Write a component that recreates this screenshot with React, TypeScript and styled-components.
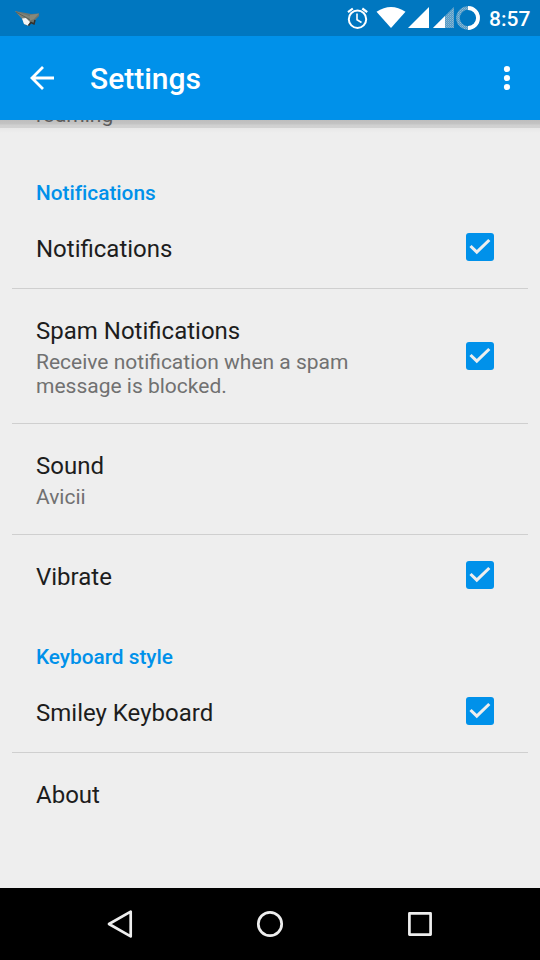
import React, { useState } from 'react';
import styled, { createGlobalStyle } from 'styled-components';

const GlobalStyle = createGlobalStyle`
  * { box-sizing: border-box; }
  body { margin: 0; background: #eee; font-family: Roboto, "Noto Sans", sans-serif; }
`;

const Screen = styled.div`
  width: 540px;
  height: 960px;
  display: flex;
  flex-direction: column;
  overflow: hidden;
  background: #eeeeee;
`;

const StatusBar = styled.div`
  flex: none;
  height: 36px;
  display: flex;
  align-items: center;
  justify-content: space-between;
  padding: 0 9px 0 14px;
  background: #0077c0;
  color: #fff;
`;

const StatusIcons = styled.div`
  display: flex;
  align-items: center;
`;

const Clock = styled.span`
  width: 42px;
  margin-left: 8px;
  font-size: 21px;
  line-height: 36px;
  font-weight: 500;
  padding-top: 2px;
  white-space: nowrap;
`;

const AppBar = styled.header`
  flex: none;
  height: 84px;
  display: flex;
  align-items: center;
  background: #0091ea;
  color: #fff;
`;

const BarButton = styled.button<{ $width: number }>`
  width: ${(p) => p.$width}px;
  height: 84px;
  padding: 0;
  border: 0;
  background: none;
  display: flex;
  align-items: center;
  justify-content: center;
`;

const BarTitle = styled.h1`
  flex: 1;
  margin: 0;
  padding: 2px 0 0 6px;
  font-size: 30px;
  line-height: 36px;
  font-weight: 500;
`;

const List = styled.main`
  flex: 1;
  min-height: 0;
  overflow: hidden;
  padding: 0 12px;
  background: linear-gradient(#bebebe 0, #c4c4c4 4px, #d0d0d0 5px, #d2d2d2 8px, #e8e8e8 8px, #eeeeee 13px);
`;

const Summary = styled.p`
  margin: 5px 0 0;
  width: 340px;
  font-size: 21px;
  line-height: 24px;
  color: #717171;
`;

const ScrolledSummary = styled(Summary)`
  margin: -17px 0 0;
  padding-left: 24px;
  height: 49px;
  color: #5c5c5c;
`;

const SectionHeader = styled.h2`
  height: 55px;
  margin: 0;
  padding: 29px 24px 0;
  font-size: 21px;
  line-height: 24px;
  font-weight: 500;
  letter-spacing: -0.01px;
  font-size: 20.8px;
  color: #0091ea;
`;

const Row = styled.div<{ $divided: boolean }>`
  display: flex;
  align-items: center;
  justify-content: space-between;
  padding-right: 34px;
  padding-left: 24px;
  border-bottom: ${(p) => (p.$divided ? '1px solid #cfcfcf' : '0')};
`;

const Labels = styled.div`
  padding: 28px 0 25px;
`;

const Label = styled.div`
  font-size: 24px;
  line-height: 28px;
  color: #1d1d1d;
`;

const Checkbox = styled.button<{ $on: boolean }>`
  width: 28px;
  height: 28px;
  margin-bottom: 1px;
  padding: 0;
  border: ${(p) => (p.$on ? '0' : '3px solid #717171')};
  border-radius: 3px;
  background: ${(p) => (p.$on ? '#0091ea' : 'transparent')};
  display: flex;
  align-items: center;
  justify-content: center;
`;

const NavBar = styled.nav`
  flex: none;
  height: 72px;
  display: flex;
  justify-content: center;
  background: #000;
`;

const NavButton = styled.button`
  width: 150px;
  height: 72px;
  padding: 0;
  border: 0;
  background: none;
  display: flex;
  align-items: center;
  justify-content: center;
`;

type SettingProps = {
  label: string;
  summary?: string;
  checkable?: boolean;
  divided?: boolean;
};

function Setting({ label, summary, checkable = false, divided = false }: SettingProps) {
  const [on, setOn] = useState(true);
  return (
    <Row $divided={divided}>
      <Labels>
        <Label>{label}</Label>
        {summary && <Summary>{summary}</Summary>}
      </Labels>
      {checkable && (
        <Checkbox $on={on} role="checkbox" aria-checked={on} aria-label={label} onClick={() => setOn(!on)}>
          {on && (
            <svg width="28" height="28" viewBox="0 0 28 28" fill="none">
              <path d="M4.5 13 L10.8 19.2 L23.3 7" stroke="#eee" strokeWidth="3.1" />
            </svg>
          )}
        </Checkbox>
      )}
    </Row>
  );
}

function PlaneIcon() {
  return (
    <svg width="28" height="36" viewBox="14 0 28 36">
      <path d="M15 11 L31 14 L39 13.5 L39 16 L35 20 L35 24 L31 23 L28 26 L24 24 L22 18 Z" fill="#6e756d" />
      <path d="M15 11 L32 17 L23 20 Z" fill="#7d8379" />
      <path d="M30 15 L39 13.5 L34 19 L29 21 Z" fill="#84887b" />
      <path d="M22 18.5 L26 18 L30 22 L28 25.5 L24 24 Z" fill="#f4f6f6" />
      <path d="M28.5 25.5 L31 22.5 L34 24 L35 20" stroke="#33312d" strokeWidth="1.5" fill="none" />
      <path d="M16 12 L27 18 L30 20" stroke="#595f58" strokeWidth="1" fill="none" />
    </svg>
  );
}

function SystemIcons() {
  return (
    <svg width="135" height="36" viewBox="346 0 135 36">
      <defs>
        <pattern id="dither" width="2" height="2" patternUnits="userSpaceOnUse">
          <rect width="2" height="2" fill="#4f9bcb" />
          <rect width="1" height="1" fill="#92b9cf" />
          <rect x="1" y="1" width="1" height="1" fill="#79abc9" />
        </pattern>
      </defs>
      <g fill="none" stroke="#fff">
        <circle cx="357.5" cy="19.2" r="8.7" strokeWidth="2" />
        <path d="M357 13.5 V19.8 L361.5 22.5" strokeWidth="1.6" />
        <path d="M348 12.2 L352.8 8.5 M362.3 8.5 L367.2 12.2" strokeWidth="2.2" />
      </g>
      <path d="M376.5 11.8 Q391 2.2 405.5 11.8 L391 28 Z" fill="#fff" />
      <path d="M408 28 L429 7 V28 Z" fill="#fff" />
      <path d="M433 28 L454 7 V28 Z" fill="url(#dither)" />
      <path d="M433 28 L445 16 V28 Z" fill="#fff" />
      <circle cx="468" cy="18" r="10" fill="none" stroke="url(#dither)" strokeWidth="3.6" />
      <path d="M468 8 A10 10 0 0 1 468 28" fill="none" stroke="#fff" strokeWidth="3.8" />
    </svg>
  );
}

export default function App() {
  return (
    <>
      <GlobalStyle />
      <Screen>
        <StatusBar>
          <PlaneIcon />
          <StatusIcons>
            <SystemIcons />
            <Clock>8:57</Clock>
          </StatusIcons>
        </StatusBar>
        <AppBar>
          <BarButton $width={84} aria-label="Back">
            <svg width="26" height="26" viewBox="0 0 26 26" fill="none" stroke="#fff" strokeWidth="2.8">
              <path d="M25 13 H3.5 M14 2 L3 13 L14 24" />
            </svg>
          </BarButton>
          <BarTitle>Settings</BarTitle>
          <BarButton $width={66} aria-label="More options">
            <svg width="8" height="26" viewBox="0 0 8 26" fill="#fff">
              <circle cx="4" cy="4" r="3.1" />
              <circle cx="4" cy="13" r="3.1" />
              <circle cx="4" cy="22" r="3.1" />
            </svg>
          </BarButton>
        </AppBar>
        <List>
          <ScrolledSummary>roaming</ScrolledSummary>
          <SectionHeader>Notifications</SectionHeader>
          <Setting label="Notifications" checkable divided />
          <Setting label="Spam Notifications" summary="Receive notification when a spam message is blocked." checkable divided />
          <Setting label="Sound" summary="Avicii" divided />
          <Setting label="Vibrate" checkable />
          <SectionHeader>Keyboard style</SectionHeader>
          <Setting label="Smiley Keyboard" checkable divided />
          <Setting label="About" />
        </List>
        <NavBar>
          <NavButton aria-label="Back">
            <svg width="30" height="30" viewBox="0 0 30 30" fill="none" stroke="#eee" strokeWidth="2.7" strokeLinejoin="round">
              <path d="M4 15 L25.7 2.6 V27.4 Z" />
            </svg>
          </NavButton>
          <NavButton aria-label="Home">
            <svg width="30" height="30" viewBox="0 0 30 30" fill="none" stroke="#eee" strokeWidth="2.7">
              <circle cx="15" cy="15" r="11.7" />
            </svg>
          </NavButton>
          <NavButton aria-label="Recent apps">
            <svg width="30" height="30" viewBox="0 0 30 30" fill="none" stroke="#eee" strokeWidth="2.7" strokeLinejoin="round">
              <rect x="4.4" y="4.4" width="21.2" height="21.2" />
            </svg>
          </NavButton>
        </NavBar>
      </Screen>
    </>
  );
}
